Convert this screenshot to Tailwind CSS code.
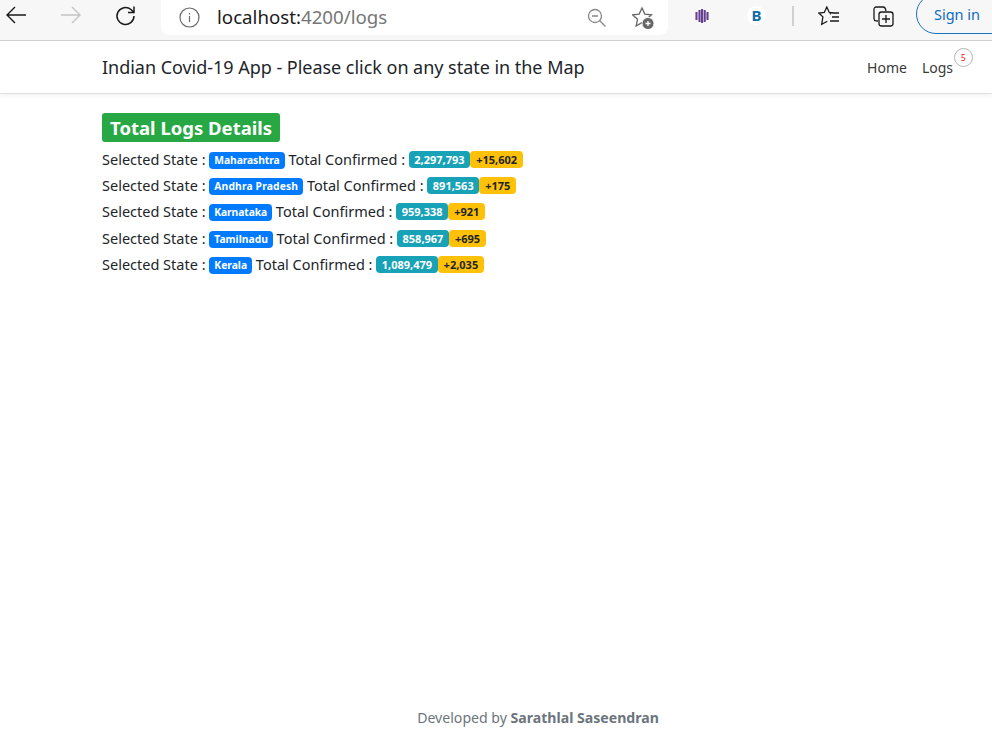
<!doctype html>
<html lang="en">
<head>
<meta charset="utf-8">
<title>Logs</title>
<script src="https://cdn.jsdelivr.net/npm/@tailwindcss/browser@4"></script>
</head>
<body class="bg-white font-['Noto_Sans',sans-serif] text-[#212529] h-[739px] w-[992px] overflow-hidden flex flex-col">
<header class="h-[41px] bg-[#f7f7f7] border-b border-[#d2d2d2] flex items-start shrink-0">
  <div class="w-[161px] h-[40px] relative shrink-0">
    <svg class="absolute left-[5px] top-[5px]" width="22" height="20" viewBox="0 0 22 20" fill="none" stroke="#1a1a1a" stroke-width="1.4"><path d="M21 10H2M10 2l-8 8 8 8"/></svg>
    <svg class="absolute left-[60px] top-[5px]" width="22" height="20" viewBox="0 0 22 20" fill="none" stroke="#c4c4c4" stroke-width="1.4"><path d="M1 10h19M12 2l8 8-8 8"/></svg>
    <svg class="absolute left-[115px] top-[5px]" width="22" height="22" viewBox="0 0 22 22" fill="none" stroke="#1a1a1a" stroke-width="1.5"><path d="M19 11a8.500 8.500 0 1 1-3-6.500L19 7.500M19 1.500v6h-6"/></svg>
  </div>
  <div class="w-[507px] h-[35px] bg-white rounded-b-lg flex items-center pl-[18px] shrink-0">
    <svg width="21" height="21" viewBox="0 0 21 21" fill="none" stroke="#6b6b6b" stroke-width="1.2"><circle cx="10.500" cy="10.500" r="9.500"/><path d="M10.500 9v6M10.500 6v1.500"/></svg>
    <div class="ml-[17px] text-[18.700px] text-[#1a1a1a] leading-none">localhost:<span class="text-[#767676]">4200/logs</span></div>
    <div class="ml-auto flex items-center">
      <svg class="ml-[1px]" width="20" height="20" viewBox="0 0 20 20" fill="none" stroke="#888" stroke-width="1.300"><circle cx="8" cy="8" r="6.500"/><path d="M5 8h6M12.500 12.500l6 6"/></svg>
      <svg class="ml-[25px] mr-[13px]" width="23" height="24" viewBox="0 0 23 24" fill="none" stroke="#666" stroke-width="1.300"><path d="M10 2l2.800 6.100 6.700.7-5 4.500 1.400 6.700-5.900-3.400-5.900 3.400 1.400-6.700-5-4.500 6.700-.7z"/><circle cx="16" cy="17.500" r="6" fill="#666" stroke="#f7f7f7" stroke-width="1"/><path d="M16 15v5M13.500 17.500h5" stroke="#fff"/></svg>
    </div>
  </div>
  <div class="flex-1 h-[40px] relative">
    <svg class="absolute left-[27px] top-[8px]" width="14" height="16" viewBox="0 0 14 16" fill="none" stroke="#66408f" stroke-width="2.100"><path d="M1.500 4v8M4.500 2v12M7 1v14M9.700 2v12M12.500 4v8"/></svg>
    <div class="absolute left-[79px] top-[6px] w-[19px] h-[19px] rounded-full bg-white flex items-center justify-center text-[15px] font-bold leading-none text-[#0f6ba8]">B</div>
    <div class="absolute left-[124px] top-[6px] w-[2px] h-[20px] bg-[#d0d0d0]"></div>
    <svg class="absolute left-[150px] top-[6px]" width="22" height="20" viewBox="0 0 22 20" fill="none" stroke="#1a1a1a" stroke-width="1.300"><path d="M16 6.800l-4.700-.4L8.800 1 6.300 6.400.8 7l4.100 3.900L3.700 18.300l5.600-3.100M13 7.200l-1 1M14 7h7M14 11h7M12 15h9"/></svg>
    <svg class="absolute left-[205px] top-[6px]" width="22" height="21" viewBox="0 0 22 21" fill="none" stroke="#1a1a1a" stroke-width="1.300"><path d="M5 15l-2-.2Q1 14.500 1 12.500L1 3.500Q1 1 3.500 1L10 1Q12 1 12.500 3l.5 2"/><rect x="6" y="6" width="14" height="14" rx="2.500"/><path d="M13 9v8M9 13h8"/></svg>
    <div class="absolute left-[248px] top-[-6px] w-[120px] h-[40px] border-[1.500px] border-[#1a73bd] rounded-full pl-[17px] pt-[9px] text-[14.500px] text-[#0f6cbd]">Sign in</div>
  </div>
</header>

<nav class="h-[53px] border-b border-[#dfdfdf] shadow-[0_2px_4px_rgba(0,0,0,0.05)] pl-[102px] pr-[39px] flex items-center justify-between shrink-0">
  <div class="text-[18px] tracking-[-0.03px] whitespace-nowrap">Indian Covid-19 App - Please click on any state in the Map</div>
  <div class="flex items-center gap-[15px] text-[14px] relative text-[#3a3a3a] mt-[1px]">
    <span>Home</span>
    <span class="relative">Logs
      <span class="absolute left-[32px] top-[-9px] w-[19px] h-[19px] rounded-full border border-[#b5b5b5] bg-white text-[8px] text-[#ff0000] flex items-center justify-center">5</span>
    </span>
  </div>
</nav>

<main class="pl-[102px] pt-[19px] flex-1 text-[14.500px] leading-[26.300px] whitespace-nowrap">
  <div class="mb-[3.800px] leading-none"><span class="inline-block bg-[#28a745] text-white text-[18.500px] font-bold rounded-[3px] px-[8px] h-[29px] leading-[30px]">Total Logs Details</span></div>
  <div>Selected State : <span class="inline-block bg-[#007bff] text-white text-[10.300px] tracking-[-0.08px] font-bold rounded-[4px] px-[5px] leading-[17px] align-[1px]">Maharashtra</span> Total Confirmed : <span class="inline-block bg-[#17a2b8] text-white text-[11px] font-bold rounded-[4px] px-[5.500px] leading-[17px] align-[1px]">2,297,793</span><span class="inline-block bg-[#ffc107] text-[#212529] text-[11px] font-bold rounded-[4px] px-[6px] leading-[17px] align-[1px]">+15,602</span></div>
  <div>Selected State : <span class="inline-block bg-[#007bff] text-white text-[10.300px] tracking-[0.15px] font-bold rounded-[4px] px-[5px] leading-[17px] align-[1px]">Andhra Pradesh</span> Total Confirmed : <span class="inline-block bg-[#17a2b8] text-white text-[11px] font-bold rounded-[4px] px-[5.500px] leading-[17px] align-[1px]">891,563</span><span class="inline-block bg-[#ffc107] text-[#212529] text-[11px] font-bold rounded-[4px] px-[6px] leading-[17px] align-[1px]">+175</span></div>
  <div>Selected State : <span class="inline-block bg-[#007bff] text-white text-[10.300px] tracking-[-0.1px] font-bold rounded-[4px] px-[5px] leading-[17px] align-[1px]">Karnataka</span> Total Confirmed : <span class="inline-block bg-[#17a2b8] text-white text-[11px] font-bold rounded-[4px] px-[5.500px] leading-[17px] align-[1px]">959,338</span><span class="inline-block bg-[#ffc107] text-[#212529] text-[11px] font-bold rounded-[4px] px-[6px] leading-[17px] align-[1px]">+921</span></div>
  <div>Selected State : <span class="inline-block bg-[#007bff] text-white text-[10.300px] font-bold rounded-[4px] px-[5px] leading-[17px] align-[1px]">Tamilnadu</span> Total Confirmed : <span class="inline-block bg-[#17a2b8] text-white text-[11px] font-bold rounded-[4px] px-[5.500px] leading-[17px] align-[1px]">858,967</span><span class="inline-block bg-[#ffc107] text-[#212529] text-[11px] font-bold rounded-[4px] px-[6px] leading-[17px] align-[1px]">+695</span></div>
  <div>Selected State : <span class="inline-block bg-[#007bff] text-white text-[10.300px] font-bold rounded-[4px] px-[5px] leading-[17px] align-[1px]">Kerala</span> Total Confirmed : <span class="inline-block bg-[#17a2b8] text-white text-[11px] font-bold rounded-[4px] px-[5.500px] leading-[17px] align-[1px]">1,089,479</span><span class="inline-block bg-[#ffc107] text-[#212529] text-[11px] font-bold rounded-[4px] px-[6px] leading-[17px] align-[1px]">+2,035</span></div>
</main>

<footer class="h-[32px] shrink-0 text-center text-[14.100px] text-[#6c757d] pl-[84px]">Developed by <b class="font-bold">Sarathlal Saseendran</b></footer>
</body>
</html>
